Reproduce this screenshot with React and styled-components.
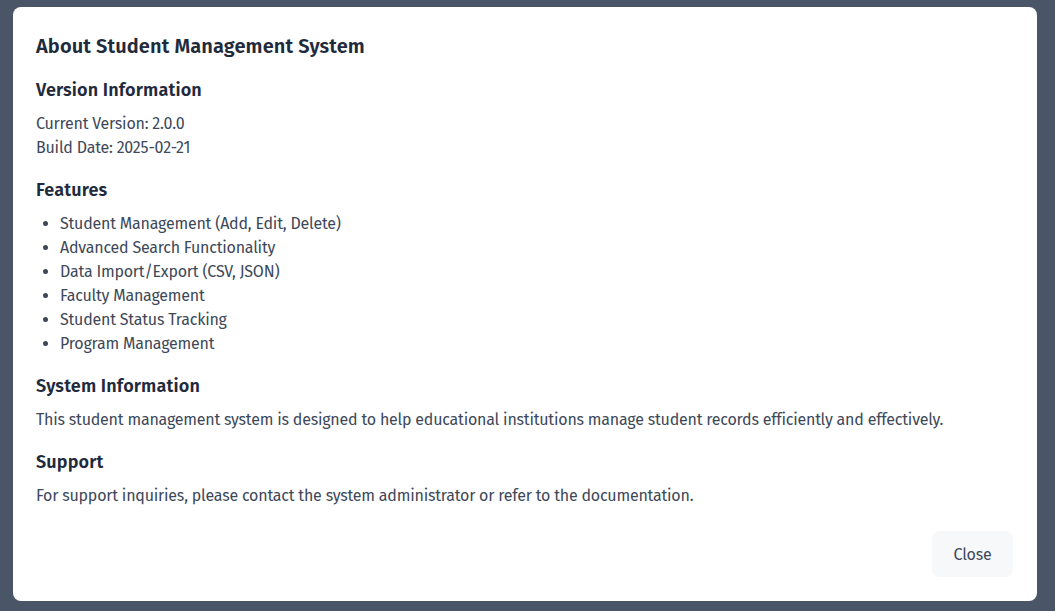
import React from "react";
import styled, { createGlobalStyle } from "styled-components";

const Global = createGlobalStyle`
  html, body {
    margin: 0;
    padding: 0;
    background: #4a5568;
    font-family: "Fira Sans", "Open Sans", "Noto Sans", sans-serif;
  }
`;

const Overlay = styled.div`
  width: 1055px;
  height: 611px;
  box-sizing: border-box;
  padding: 7px 18px 10px 13px;
  display: flex;
  background: #4a5568;
`;

const Modal = styled.div`
  flex: 1;
  background: #ffffff;
  border-radius: 8px;
  padding: 25px 24px 24px 23px;
  display: flex;
  flex-direction: column;
  box-sizing: border-box;
`;

const Title = styled.h1`
  margin: 0 0 16px;
  font-size: 20px;
  line-height: 28px;
  font-weight: 600;
  letter-spacing: 0.12px;
  color: #1f2b3d;
`;

const Section = styled.section`
  & + & {
    margin-top: 16px;
  }
`;

const Heading = styled.h2`
  margin: 0 0 8px;
  font-size: 18px;
  line-height: 28px;
  font-weight: 600;
  letter-spacing: 0.15px;
  color: #1f2b3d;
`;

const Text = styled.p`
  margin: 0;
  font-size: 16px;
  line-height: 24px;
  letter-spacing: -0.21px;
  color: #3d4859;
`;

const List = styled.ul`
  margin: 0;
  padding-left: 24px;
  list-style: disc;
  li {
    font-size: 16px;
    line-height: 24px;
    letter-spacing: -0.21px;
    color: #3d4859;
  }
`;

const Footer = styled.div`
  margin-top: auto;
  display: flex;
  justify-content: flex-end;
`;

const Button = styled.button`
  width: 81px;
  height: 46px;
  border: none;
  border-radius: 8px;
  background: #f7f8f9;
  color: #3d4859;
  font-family: inherit;
  font-size: 16px;
  letter-spacing: -0.21px;
  cursor: pointer;
`;

const features = [
  "Student Management (Add, Edit, Delete)",
  "Advanced Search Functionality",
  "Data Import/Export (CSV, JSON)",
  "Faculty Management",
  "Student Status Tracking",
  "Program Management",
];

export default function App() {
  return (
    <>
      <Global />
      <Overlay>
        <Modal>
          <Title>About Student Management System</Title>
          <Section>
            <Heading>Version Information</Heading>
            <Text>Current Version: 2.0.0</Text>
            <Text>Build Date: 2025-02-21</Text>
          </Section>
          <Section>
            <Heading>Features</Heading>
            <List>
              {features.map((f) => (
                <li key={f}>{f}</li>
              ))}
            </List>
          </Section>
          <Section>
            <Heading>System Information</Heading>
            <Text>
              This student management system is designed to help educational
              institutions manage student records efficiently and effectively.
            </Text>
          </Section>
          <Section>
            <Heading>Support</Heading>
            <Text>
              For support inquiries, please contact the system administrator or
              refer to the documentation.
            </Text>
          </Section>
          <Footer>
            <Button>Close</Button>
          </Footer>
        </Modal>
      </Overlay>
    </>
  );
}
